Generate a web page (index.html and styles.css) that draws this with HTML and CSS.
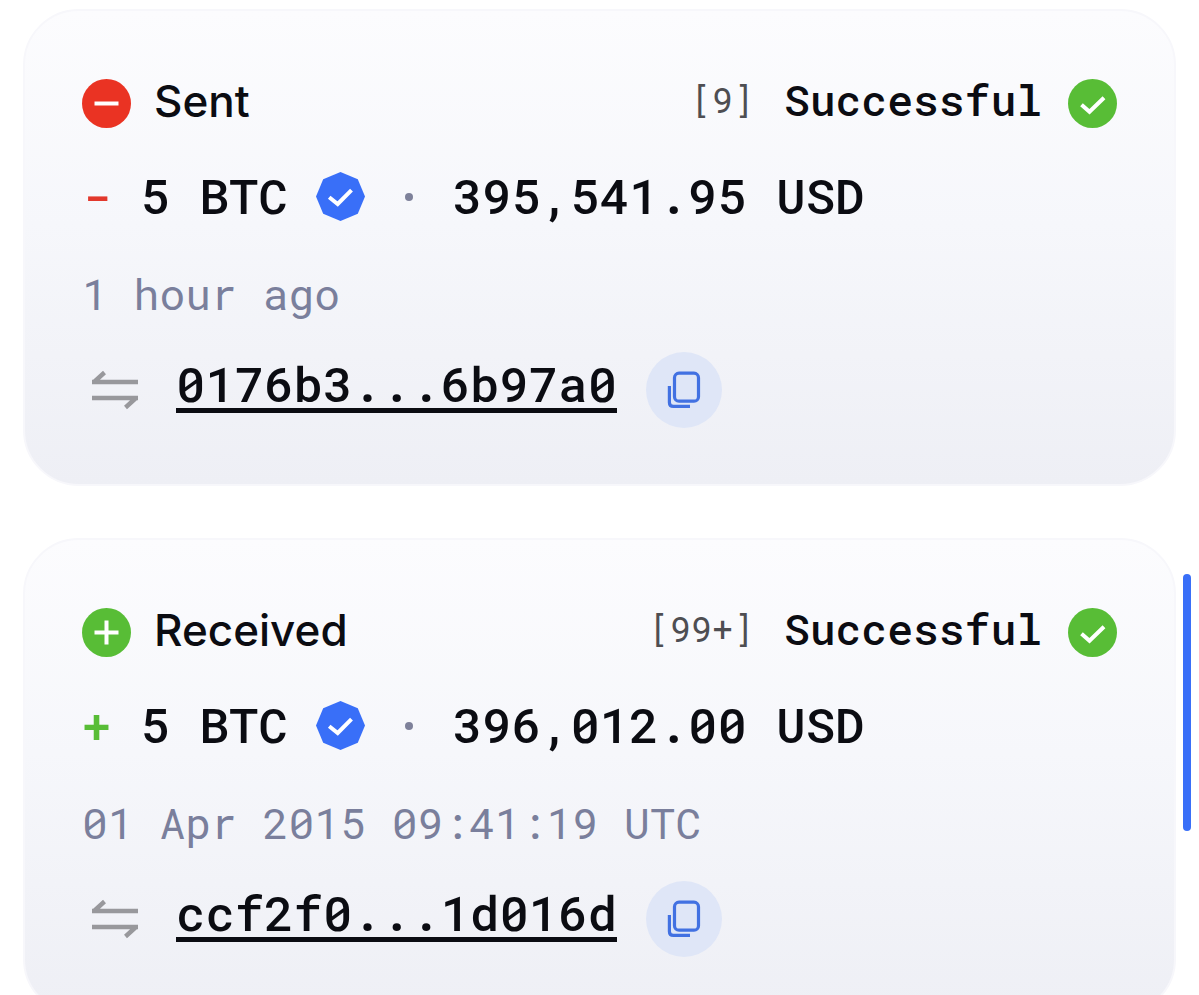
FILE: index.html
```html
<!DOCTYPE html>
<html lang="en">
<head>
    <meta charset="UTF-8">
    <meta name="viewport" content="width=device-width, initial-scale=1.0">
    <title>Transactions</title>
    <link rel="stylesheet" href="styles.css">
</head>
<body>

    <!-- Shared icons -->
    <svg class="sprite" aria-hidden="true">
        <symbol id="check" viewBox="0 0 49 49">
            <circle cx="24.5" cy="24.5" r="24.5" fill="#58bd36"/>
            <path d="M13.5 25.8l8 7L36 18.8" fill="none" stroke="#fff" stroke-width="4"/>
        </symbol>
        <symbol id="verified" viewBox="0 0 49 49">
            <path d="M24.5 0L41.8 7.2L49 24.5L41.8 41.8L24.5 49L7.2 41.8L0 24.5L7.2 7.2Z" fill="#396ff8"/>
            <path d="M13.2 25.2l8.500 6.8L35.500 18.200" fill="none" stroke="#fff" stroke-width="4"/>
        </symbol>
        <symbol id="transfer" viewBox="0 0 46 40">
            <path d="M46 12H0M1.5 12.500L12.500 2.500M0 28H46M44.5 27.500L33.500 37.5" fill="none" stroke="#98989c" stroke-width="4.4"/>
        </symbol>
        <symbol id="copy" viewBox="0 0 34 38">
            <rect x="7.5" y="2.2" width="24" height="28" rx="4.5" fill="none" stroke="#4271e2" stroke-width="3.2"/>
            <path d="M2.4 15V31.5Q2.4 35.4 6.4 35.4H23" fill="none" stroke="#4271e2" stroke-width="3.2"/>
        </symbol>
    </svg>

    <div class="page">
        <main class="list">

            <!-- Sent -->
            <article class="card">
                <div class="row header">
                    <svg class="icon" viewBox="0 0 49 49" aria-hidden="true">
                        <circle cx="24.5" cy="24.5" r="24.5" fill="#ea3323"/>
                        <path d="M12.5 24.5H36.5" stroke="#fff" stroke-width="4"/>
                    </svg>
                    <h2 class="type">Sent</h2>
                    <span class="count">[9]</span>
                    <span class="status">Successful</span>
                    <svg class="icon" aria-hidden="true"><use href="#check"/></svg>
                </div>
                <div class="row amount">
                    <span class="coins"><span class="minus">-</span> 5 BTC</span>
                    <svg class="icon" aria-hidden="true"><use href="#verified"/></svg>
                    <span class="dot"></span>
                    <span class="fiat">395,541.95 USD</span>
                </div>
                <time class="time">1 hour ago</time>
                <div class="row hash">
                    <svg class="transfer" aria-hidden="true"><use href="#transfer"/></svg>
                    <a class="link" href="#tx-0176b3">0176b3...6b97a0</a>
                    <button class="copy" type="button" aria-label="Copy">
                        <svg class="copy-icon" aria-hidden="true"><use href="#copy"/></svg>
                    </button>
                </div>
            </article>

            <!-- Received -->
            <article class="card">
                <div class="row header">
                    <svg class="icon" viewBox="0 0 49 49" aria-hidden="true">
                        <circle cx="24.5" cy="24.5" r="24.5" fill="#58bd36"/>
                        <path d="M12.5 24.5H36.5M24.5 12.5V36.5" stroke="#fff" stroke-width="4"/>
                    </svg>
                    <h2 class="type">Received</h2>
                    <span class="count">[99+]</span>
                    <span class="status">Successful</span>
                    <svg class="icon" aria-hidden="true"><use href="#check"/></svg>
                </div>
                <div class="row amount">
                    <span class="coins"><span class="plus">+</span> 5 BTC</span>
                    <svg class="icon" aria-hidden="true"><use href="#verified"/></svg>
                    <span class="dot"></span>
                    <span class="fiat">396,012.00 USD</span>
                </div>
                <time class="time">01 Apr 2015 09:41:19 UTC</time>
                <div class="row hash">
                    <svg class="transfer" aria-hidden="true"><use href="#transfer"/></svg>
                    <a class="link" href="#tx-ccf2f0">ccf2f0...1d016d</a>
                    <button class="copy" type="button" aria-label="Copy">
                        <svg class="copy-icon" aria-hidden="true"><use href="#copy"/></svg>
                    </button>
                </div>
            </article>

        </main>
        <div class="thumb"></div>
    </div>

</body>
</html>
```
FILE: styles.css
```css
* {
    box-sizing: border-box;
}
body {
    margin: 0;
    background-color: white;
    color: #0b0c12;
    font-family: "Roboto Mono", "DejaVu Sans Mono", monospace;
    font-weight: 500;
}
.sprite {
    position: absolute;
    width: 0;
    height: 0;
}
.page {
    display: flex;
    height: 100vh;
    padding: 0 8px 0 23px;
    gap: 7px;
}
.list {
    flex: 1;
    padding-top: 9px;
    overflow-y: auto;
    scrollbar-width: none;
}
.thumb {
    width: 8px;
    height: 257px;
    margin-top: 574px;
    border-radius: 4px;
    background-color: #396ff8;
}
.card {
    padding: 68px 57px 56px;
    margin-bottom: 52px;
    border: 2px solid #f7f7fb;
    border-radius: 56px;
    background: linear-gradient(#fcfcfe, #f6f7fb 45%, #eeeff5);
}
.row {
    display: flex;
    align-items: center;
    white-space: pre;
}
.icon {
    flex: none;
    width: 49px;
    height: 49px;
}
.header {
    height: 49px;
    margin-bottom: 44px;
}
.type {
    flex: 1;
    margin: 0 0 0 23px;
    padding-bottom: 6px;
    font-family: Inter, sans-serif;
    font-size: 44px;
    font-weight: 500;
    line-height: 48px;
}
.count {
    margin-right: 30px;
    padding-bottom: 10px;
    color: #4e4e52;
    font-size: 35px;
    font-weight: 400;
}
.status {
    margin-right: 26px;
    padding-bottom: 8px;
    font-size: 43px;
}
.amount {
    height: 49px;
    font-size: 49px;
}
.coins,
.fiat {
    padding-bottom: 4px;
}
.coins {
    margin-right: 28px;
}
.minus {
    color: #e2382c;
}
.plus {
    color: #58bd36;
}
.dot {
    width: 8px;
    height: 8px;
    margin: 0 40px;
    border-radius: 50%;
    background-color: #7e819a;
}
.time {
    display: block;
    margin: 43px 0 28px;
    color: #7a7f9c;
    font-size: 43px;
    font-weight: 400;
    line-height: 60px;
}
.hash {
    height: 76px;
    padding-left: 10px;
}
.transfer {
    width: 46px;
    height: 40px;
    margin-right: 38px;
}
.link {
    margin: 0 29px 10px 0;
    border-bottom: 5px solid #0b0c12;
    color: inherit;
    font-size: 49px;
    line-height: 50px;
    text-decoration: none;
}
.copy {
    display: flex;
    align-items: center;
    justify-content: center;
    width: 76px;
    height: 76px;
    padding: 0;
    border: none;
    border-radius: 50%;
    background-color: #dfe6f7;
    cursor: pointer;
}
.copy-icon {
    width: 34px;
    height: 38px;
}
```
